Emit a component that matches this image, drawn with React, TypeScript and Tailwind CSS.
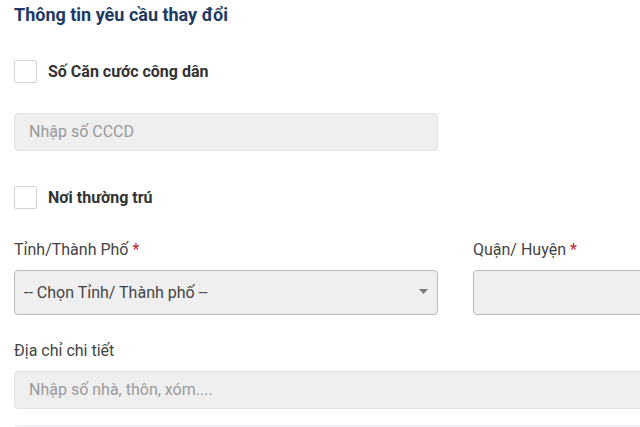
import { useState } from "react";

function Checkbox({ label }: { label: string }) {
  const [checked, setChecked] = useState(false);
  return (
    <label className="flex items-center h-[23px] gap-[11px] cursor-pointer">
      <span
        onClick={() => setChecked(!checked)}
        className="w-[23px] h-[23px] rounded-[2px] border border-[#d3d3d3] bg-white"
      />
      <span className="text-[16px] leading-[23px] font-bold text-[#333333]">{label}</span>
    </label>
  );
}

export default function App() {
  return (
    <div className="w-[640px] h-[427px] overflow-hidden bg-white font-['Roboto',sans-serif]">
      <div className="w-[883px] pl-[14px]">
        <h2 className="text-[18px] leading-[30px] font-bold text-[#1d3a64]">
          Thông tin yêu cầu thay đổi
        </h2>

        {/* CCCD */}
        <div className="mt-[30px]">
          <Checkbox label="Số Căn cước công dân" />
        </div>
        <div className="mt-[30px] w-[424px] h-[38px] rounded-[4px] border border-[#e2e2e2] bg-[#efefef] flex items-center px-[14px]">
          <span className="text-[16px] text-[#9a9a9a]">Nhập số CCCD</span>
        </div>

        {/* Noi thuong tru */}
        <div className="mt-[35px]">
          <Checkbox label="Nơi thường trú" />
        </div>

        <div className="mt-[31px] grid grid-cols-[424px_424px] gap-x-[35px]">
          <div>
            <div className="text-[16px] leading-[20px] text-[#444444]">
              Tỉnh/Thành Phố <span className="text-[#c0262d]">*</span>
            </div>
            <div className="mt-[10px] h-[45px] rounded-[4px] border border-[#b9b9b9] bg-[#efefef] flex items-center justify-between pl-[9px] pr-[9px]">
              <span className="text-[16px] text-[#444444]">-- Chọn Tỉnh/ Thành phố --</span>
              <svg width="9" height="5" viewBox="0 0 9 5" className="mb-[2px]">
                <path d="M0 0h9L4.5 5z" fill="#7a7a7a" />
              </svg>
            </div>
          </div>
          <div>
            <div className="text-[16px] leading-[20px] text-[#444444]">
              Quận/ Huyện <span className="text-[#c0262d]">*</span>
            </div>
            <div className="mt-[10px] h-[45px] rounded-[4px] border border-[#b9b9b9] bg-[#efefef]" />
          </div>
        </div>

        <div className="mt-[26px] text-[16px] leading-[20px] text-[#444444]">Địa chỉ chi tiết</div>
        <div className="mt-[10px] h-[38px] rounded-[4px] border border-[#e2e2e2] bg-[#efefef] flex items-center px-[14px]">
          <span className="text-[16px] text-[#9a9a9a]">Nhập số nhà, thôn, xóm....</span>
        </div>

        <div className="mt-[16px] h-[4px] rounded-t-[4px] border-t border-[#e6ebf2] bg-[#f7f9fc]" />
      </div>
    </div>
  );
}
